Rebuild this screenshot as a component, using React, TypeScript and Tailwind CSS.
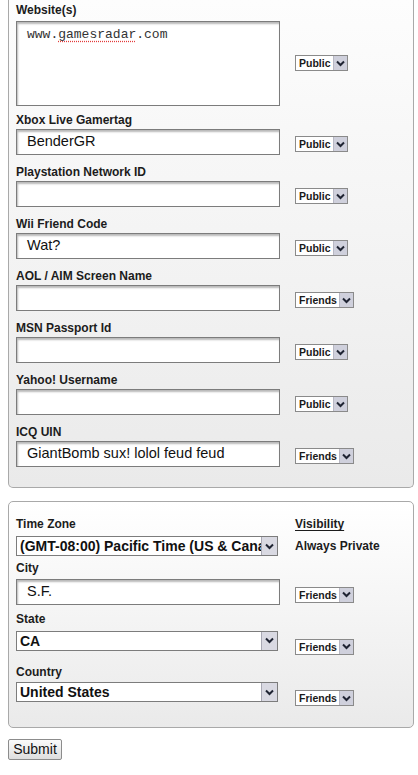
import React from "react";

const font = "font-['Liberation_Sans',Arial,sans-serif]";

function Chevron() {
  return (
    <svg width="9" height="7" viewBox="0 0 9 7" className="block">
      <path d="M1 1.5 L4.5 5 L8 1.5" fill="none" stroke="#1f2433" strokeWidth="2" />
    </svg>
  );
}

function Visibility({ value }: { value: string }) {
  return (
    <div className="flex h-[16px] items-stretch border border-[#8a8a8a] bg-white">
      <span className="pl-[3px] pr-[2px] text-[10.5px] font-bold leading-[14px] text-[#1a1a1a]">{value}</span>
      <span className="flex w-[14px] items-center justify-center border-l border-[#b8b8c4] bg-[#cfd0dc]">
        <Chevron />
      </span>
    </div>
  );
}

function TextField({ value }: { value?: string }) {
  return (
    <div className="flex h-[26px] w-[264px] items-center border border-[#7c7c7c] bg-white pl-[10px] text-[14.5px] text-[#111] shadow-[inset_1px_2px_2px_rgba(0,0,0,0.28)]">
      {value}
    </div>
  );
}

function Dropdown({ value }: { value: string }) {
  return (
    <div className="flex h-[20px] w-[262px] items-stretch border border-[#7c7c7c] bg-white">
      <span className="flex-1 overflow-hidden whitespace-nowrap pl-[3px] text-[14px] font-bold leading-[18px] text-[#111]">
        {value}
      </span>
      <span className="flex w-[16px] items-center justify-center border-l border-[#a8a8b4] bg-[#d9d9e2]">
        <Chevron />
      </span>
    </div>
  );
}

function Label({ children }: { children: React.ReactNode }) {
  return <div className="h-[14px] text-[12px] font-bold leading-[14px] text-[#1c1c1c]">{children}</div>;
}

const fields = [
  { label: "Xbox Live Gamertag", value: "BenderGR", vis: "Public" },
  { label: "Playstation Network ID", value: "", vis: "Public" },
  { label: "Wii Friend Code", value: "Wat?", vis: "Public" },
  { label: "AOL / AIM Screen Name", value: "", vis: "Friends" },
  { label: "MSN Passport Id", value: "", vis: "Public" },
  { label: "Yahoo! Username", value: "", vis: "Public" },
  { label: "ICQ UIN", value: "GiantBomb sux! lolol feud feud", vis: "Friends" },
];

export default function App() {
  return (
    <div className={`${font} h-[775px] w-[418px] overflow-hidden bg-white`}>
      {/* contact panel, cut off at the top */}
      <div className="ml-[8px] w-[406px] rounded-b-[5px] border border-t-0 border-[#a9a9a9] bg-gradient-to-b from-[#fdfdfd] to-[#eaeaea] pb-[20px] pl-[7px] pt-[3px]">
        <Label>Website(s)</Label>
        <div className="mt-[4px] flex items-start">
          <div className="h-[85px] w-[264px] border border-[#7c7c7c] bg-white pl-[10px] pt-[5px] font-['Liberation_Mono','Courier_New',monospace] text-[13px] leading-[16px] text-[#333] shadow-[inset_1px_2px_2px_rgba(0,0,0,0.28)]">
            www.
            <span className="underline decoration-[#e23b3b] decoration-dotted underline-offset-[3px]">gamesradar</span>
            .com
          </div>
          <div className="ml-[15px] mt-[34px]">
            <Visibility value="Public" />
          </div>
        </div>
        <div className="mt-[6.5px] flex flex-col gap-[9.5px]">
          {fields.map((f) => (
            <div key={f.label}>
              <Label>{f.label}</Label>
              <div className="mt-[2.5px] flex items-start">
                <TextField value={f.value} />
                <div className="ml-[15px] mt-[7px]">
                  <Visibility value={f.vis} />
                </div>
              </div>
            </div>
          ))}
        </div>
      </div>

      {/* location panel */}
      <div className="ml-[8px] mt-[13px] w-[406px] rounded-[5px] border border-[#a9a9a9] bg-gradient-to-b from-white to-[#eaeaea] pb-[21px] pl-[7px] pt-[15px]">
        <div className="flex">
          <div className="w-[279px]">
            <Label>Time Zone</Label>
            <div className="mt-[5px]">
              <Dropdown value="(GMT-08:00) Pacific Time (US & Canada)" />
            </div>
          </div>
          <div>
            <Label>
              <span className="underline underline-offset-[2px]">Visibility</span>
            </Label>
            <div className="mt-[8px]">
              <Label>Always Private</Label>
            </div>
          </div>
        </div>

        <div className="mt-[5px]">
          <Label>City</Label>
          <div className="mt-[3.5px] flex items-start">
            <TextField value="S.F." />
            <div className="ml-[15px] mt-[8px]">
              <Visibility value="Friends" />
            </div>
          </div>
        </div>

        <div className="mt-[7.5px]">
          <Label>State</Label>
          <div className="mt-[4.5px] flex items-start">
            <Dropdown value="CA" />
            <div className="ml-[17px] mt-[8px]">
              <Visibility value="Friends" />
            </div>
          </div>
        </div>

        <div className="mt-[10px]">
          <Label>Country</Label>
          <div className="mt-[3.5px] flex items-start">
            <Dropdown value="United States" />
            <div className="ml-[17px] mt-[8px]">
              <Visibility value="Friends" />
            </div>
          </div>
        </div>
      </div>

      <div className="ml-[8px] mt-[11px] flex">
        <button className="h-[21px] w-[54px] rounded-[2px] border border-[#8c8c8c] bg-gradient-to-b from-[#fafafa] to-[#dedede] text-[14px] leading-[19px] text-[#111]">
          Submit
        </button>
      </div>
    </div>
  );
}
